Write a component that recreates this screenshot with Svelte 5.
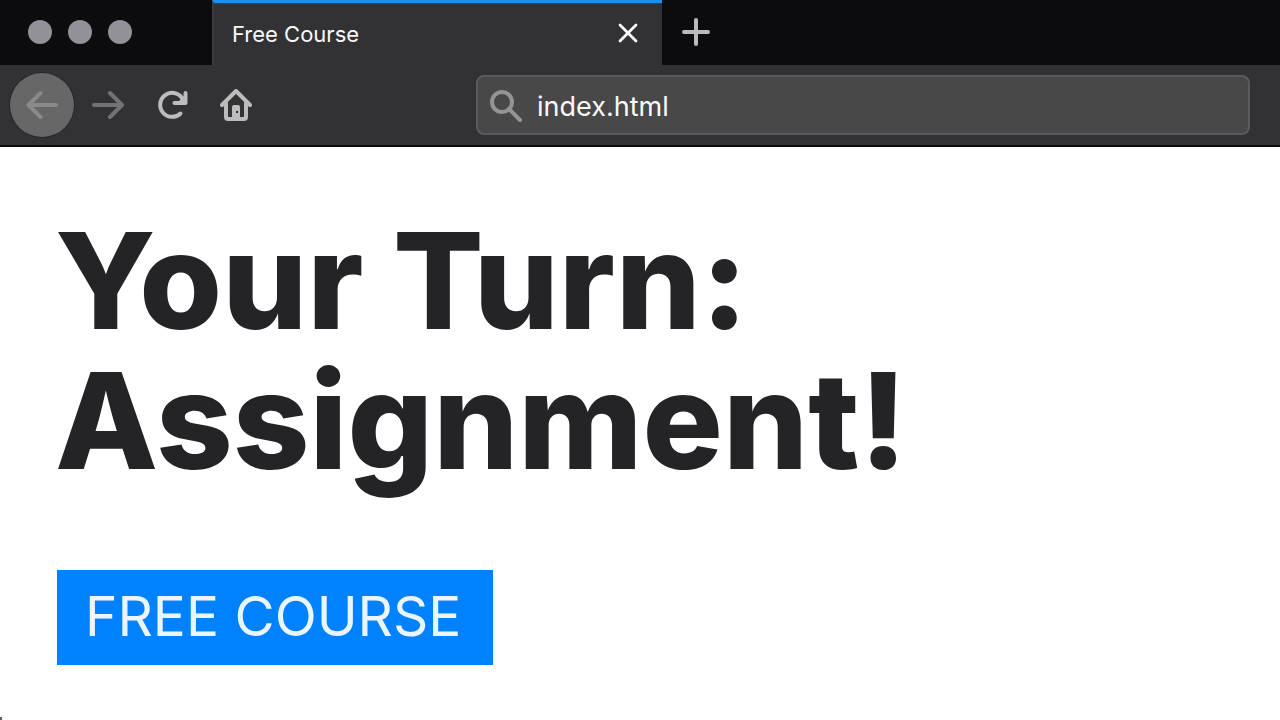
<script>
  let address = $state('index.html');
</script>

<div class="browser">
  <header>
    <div class="titlebar">
      <div class="lights" aria-hidden="true">
        <span></span><span></span><span></span>
      </div>
      <div class="tab">
        <span class="tab-title">Free Course</span>
        <button class="close" aria-label="Close tab">
          <svg width="24" height="24" viewBox="0 0 24 24"><path d="M4 3l16 16M20 3L4 19" stroke="#fafafa" stroke-width="2.8" /></svg>
        </button>
      </div>
      <button class="add" aria-label="New tab">
        <svg width="32" height="32" viewBox="0 0 32 32"><path d="M16 3v24M4 15h24" stroke="#b9b9ba" stroke-width="4" /></svg>
      </button>
    </div>
    <div class="toolbar">
      <nav aria-label="Browser navigation">
        <button class="back" aria-label="Back">
          <svg width="32" height="32" viewBox="0 0 32 32"><path d="M30 16H2.500M14.500 4L2.500 16l12 12" stroke="#8a8a8b" stroke-width="4" /></svg>
        </button>
        <button aria-label="Forward">
          <svg width="32" height="32" viewBox="0 0 32 32"><path d="M2 16h27.500M18 4l12 12-12 12" stroke="#737374" stroke-width="4" /></svg>
        </button>
        <button aria-label="Reload">
          <svg width="32" height="32" viewBox="0 0 32 32"><path d="M24.500 24.500A12 12 0 1 1 26 9" stroke="#bcbcbd" stroke-width="4" /><path d="M18.500 14H29.500V4" stroke="#bcbcbd" stroke-width="4" /><path d="M21 14l8-8v8z" fill="#bcbcbd" /></svg>
        </button>
        <button aria-label="Home">
          <svg width="32" height="32" viewBox="0 0 32 32"><path d="M2 16L16 2l14 14M6 14v14q0 2 2 2h16q2 0 2-2V14" stroke="#bcbcbd" stroke-width="4" /><path fill-rule="evenodd" d="M12 30V18q0-2 2-2h4q2 0 2 2v12zM16 22v2h2v-2z" fill="#bcbcbd" /></svg>
        </button>
      </nav>
      <label class="address">
        <svg width="34" height="34" viewBox="0 0 34 34" aria-hidden="true"><circle cx="13" cy="12" r="10" stroke="#949495" stroke-width="4" /><path d="M20 19l11 11" stroke="#949495" stroke-width="4" /></svg>
        <input type="text" aria-label="Address" bind:value={address} />
      </label>
    </div>
  </header>
  <main>
    <h1>Your Turn:<br />Assignment!</h1>
    <a class="course" href="#course">FREE COURSE</a>
  </main>
  <span class="mark" aria-hidden="true"></span>
</div>

<style>
  :global(body) {
    margin: 0;
    background: #fff;
  }
  .browser {
    position: relative;
    min-height: 100vh;
    overflow: hidden;
    font-family: Inter, "Liberation Sans", sans-serif;
  }
  svg {
    display: block;
    flex: none;
    fill: none;
    stroke-linecap: round;
    stroke-linejoin: round;
  }
  button {
    display: grid;
    place-items: center;
    padding: 0;
    border: 0;
    background: none;
  }
  .titlebar {
    display: flex;
    height: 65px;
    background: #0c0c0e;
  }
  .lights {
    display: flex;
    flex: none;
    box-sizing: border-box;
    width: 212px;
    padding: 20px 28px;
    gap: 16px;
  }
  .lights span {
    width: 24px;
    height: 24px;
    border-radius: 50%;
    background: #929197;
  }
  .tab {
    display: flex;
    align-items: center;
    justify-content: space-between;
    box-sizing: border-box;
    width: 450px;
    padding: 0 22px 0 18px;
    border-left: 2px solid #3c3c3e;
    border-top: 3px solid #1590f5;
    background: #323234;
    box-shadow: inset 0 1px #1c4771;
  }
  .tab-title {
    color: #fafafa;
    font-size: 22px;
    line-height: 28px;
  }
  .add {
    width: 68px;
  }
  .toolbar {
    display: flex;
    align-items: center;
    justify-content: space-between;
    gap: 24px;
    height: 80px;
    padding: 0 30px 0 10px;
    border-bottom: 2px solid #0c0c0e;
    background: #323234;
  }
  nav {
    display: flex;
    align-items: center;
  }
  nav button {
    width: 64px;
    height: 64px;
  }
  nav .back {
    margin-right: 2px;
    border-radius: 50%;
    background: #676768;
    box-shadow: 0 0 0 1px #272729;
  }
  .address {
    display: flex;
    align-items: center;
    gap: 14px;
    flex: 0 1 774px;
    box-sizing: border-box;
    height: 60px;
    padding: 3px 12px 0 11px;
    border: 2px solid #5b5b5d;
    border-radius: 8px;
    background: #484849;
  }
  input {
    flex: 1;
    min-width: 0;
    padding: 0;
    border: 0;
    outline: 0;
    background: none;
    color: #fafafa;
    font-family: inherit;
    font-size: 27px;
    line-height: 36px;
  }
  main {
    padding: 63px 55px 55px;
  }
  h1 {
    margin: 0 0 80px;
    color: #242426;
    font-size: 134px;
    font-weight: 800;
    line-height: 140px;
  }
  .course {
    display: inline-block;
    margin-left: 2px;
    padding: 14px 32px 17px 28px;
    background: #0082ff;
    color: #eaf5ff;
    font-size: 55px;
    font-weight: 400;
    line-height: 64px;
    text-decoration: none;
  }
  .mark {
    position: absolute;
    bottom: 0;
    left: 0;
    width: 2px;
    height: 3px;
    background: #5f5f5f;
  }
</style>
